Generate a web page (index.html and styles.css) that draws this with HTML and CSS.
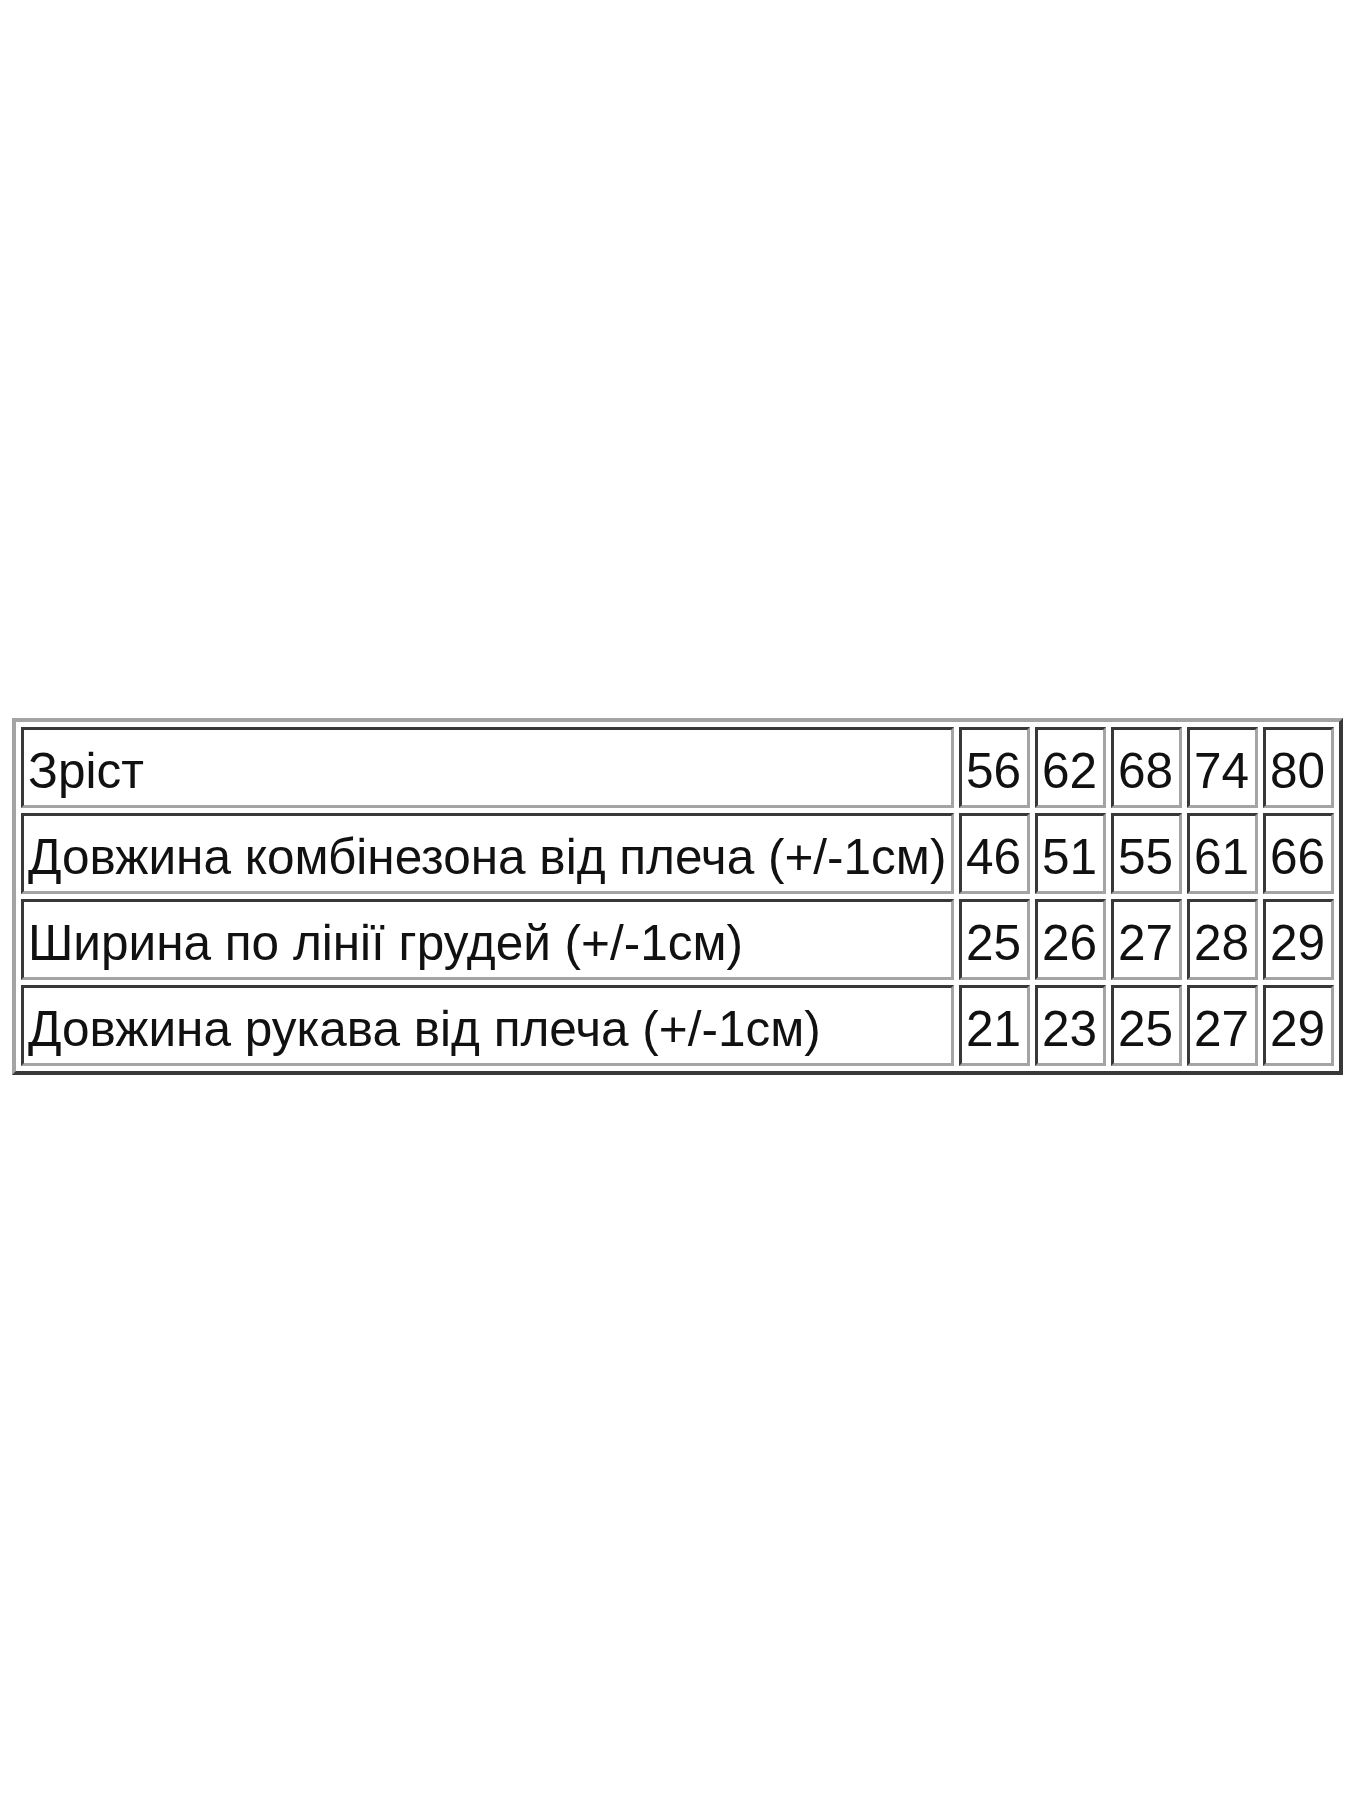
FILE: index.html
```html
<!DOCTYPE html>
<html lang="uk">
<head>
<meta charset="utf-8">
<title>Розмірна сітка</title>
<link rel="stylesheet" href="styles.css">
</head>
<body>
<main class="page">
<table class="sizes">
<tbody>
<tr><td class="label">Зріст</td><td class="num">56</td><td class="num">62</td><td class="num">68</td><td class="num">74</td><td class="num">80</td></tr>
<tr><td class="label">Довжина комбінезона від плеча (+/-1см)</td><td class="num">46</td><td class="num">51</td><td class="num">55</td><td class="num">61</td><td class="num">66</td></tr>
<tr><td class="label">Ширина по лінії грудей (+/-1см)</td><td class="num">25</td><td class="num">26</td><td class="num">27</td><td class="num">28</td><td class="num">29</td></tr>
<tr><td class="label">Довжина рукава від плеча (+/-1см)</td><td class="num">21</td><td class="num">23</td><td class="num">25</td><td class="num">27</td><td class="num">29</td></tr>
</tbody>
</table>
</main>
</body>
</html>
```

FILE: styles.css
```css
html, body {
  margin: 0;
  padding: 0;
  background: #ffffff;
}

.page {
  padding: 718px 0 0 12px;
}

.sizes {
  border-collapse: separate;
  border-spacing: 5px;
  border-style: solid;
  border-width: 4px;
  border-color: #a4a4a4 #383838 #383838 #a4a4a4;
  font-family: "Liberation Sans", Arial, sans-serif;
  font-size: 49.5px;
  color: #111111;
}

.sizes td {
  border-style: solid;
  border-width: 3px;
  border-color: #383838 #a4a4a4 #a4a4a4 #383838;
  padding: 6px 4px 0 4px;
  line-height: 69px;
  height: 69px;
  white-space: nowrap;
  vertical-align: middle;
}

.label {
  width: 919px;
  text-align: left;
}

.num {
  width: 57px;
  text-align: left;
}
```
